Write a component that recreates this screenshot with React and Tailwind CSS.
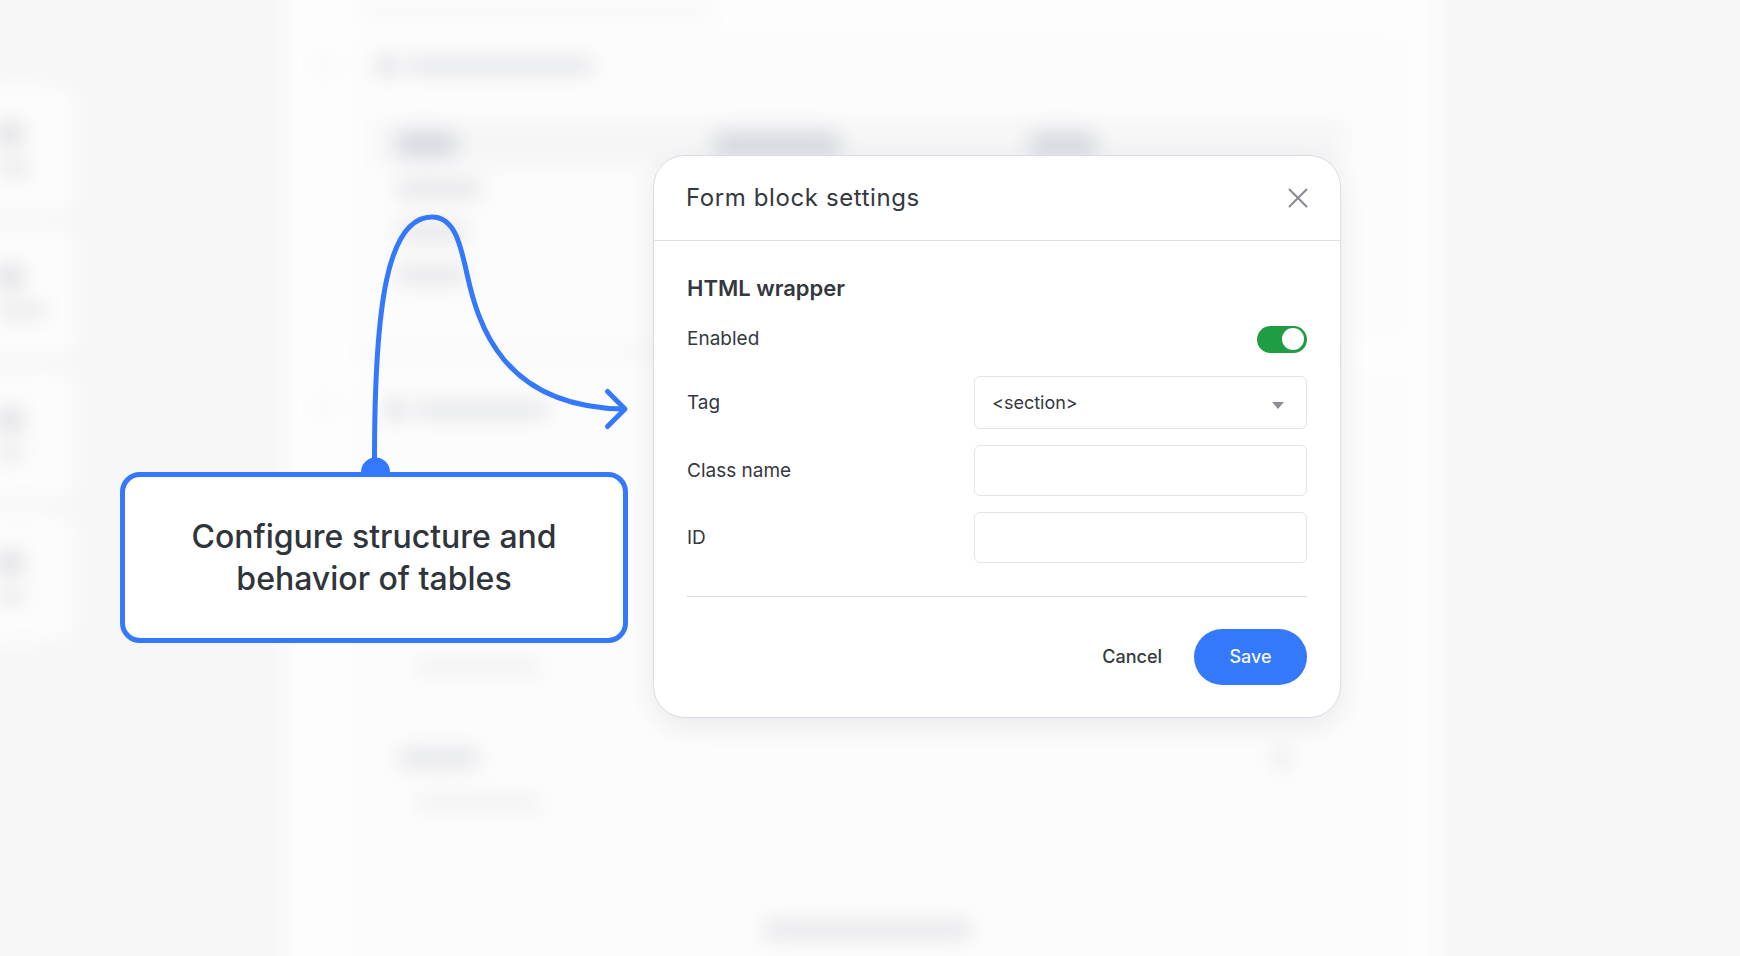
import React, { useState } from 'react'

const blocks = ['w-[36px]', 'w-[52px]', 'w-[28px]', 'w-[30px]']

const columns = ['w-[64px]', 'w-[130px]', 'w-[70px]']

const rows = ['w-[88px]', 'w-[74px]', 'w-[74px]']

function Sidebar() {
  return (
    <div className="flex w-[116px] shrink-0 flex-col gap-[18px] pt-[126px]">
      {blocks.map((label, i) => (
        <div key={i} className="h-[125px] rounded-3xl bg-[#fcfcfc] pt-9 pl-9">
          <div className="h-6 w-7 rounded-lg bg-[#dfe0e3]" />
          <div className="mt-4 flex h-3">
            <div className={`${label} rounded-full bg-[#e3e4e7]`} />
          </div>
        </div>
      ))}
    </div>
  )
}

function SectionHeader({ title }) {
  return (
    <div className="flex h-5 items-center gap-2">
      <div className="h-5 w-5 rounded-md bg-[#dfe0e4]" />
      <div className={`${title} h-4 rounded-full bg-[#e4e5e8]`} />
    </div>
  )
}

function Field({ title, children }) {
  return (
    <div className="mt-8">
      <div className="flex items-center justify-between pr-5 pl-3">
        <div className={`${title} h-5 rounded-full bg-[#e6e7ea]`} />
        <div className="h-5 w-4 rounded bg-[#e8e9ed]" />
      </div>
      {children}
    </div>
  )
}

/* Editor page that sits out of focus behind the dialog */
function Backdrop() {
  return (
    <div className="absolute inset-0 overflow-hidden" aria-hidden="true">
      <div className="-m-10 flex h-[1100px] blur-[10px]">
        <Sidebar />
        <div className="mr-[342px] ml-[210px] flex flex-1 flex-col bg-[#fdfdfd] px-8 pt-[45px]">
          <div className="ml-[38px] h-3 w-[360px] rounded-full bg-[#f5f5f5]" />

          <div className="mt-5 flex gap-6">
            <div className="mt-4 h-6 w-[14px] rounded bg-[#f7f7f7]" />
            <div className="h-[298px] flex-1 rounded-2xl border border-[#f8f8f8] bg-[#fcfcfc] pt-[18px] pr-[60px] pl-5">
              <SectionHeader title="w-[190px]" />
              <div className="mt-11 grid h-[48px] grid-cols-3 items-center bg-[#f6f6f7] pl-[18px]">
                {columns.map((width, i) => (
                  <div key={i} className={`${width} h-6 rounded-full bg-[#d5d8df]`} />
                ))}
              </div>
              {rows.map((width, i) => (
                <div key={i} className="flex h-[43px] items-center border-b border-[#f6f6f6] pl-[18px]">
                  <div className={`${width} h-5 rounded-full bg-[#e8e8eb]`} />
                </div>
              ))}
            </div>
          </div>

          <div className="mt-3 ml-[38px] h-3 w-[355px] rounded-full bg-[#f6f6f6]" />

          <div className="mt-4 flex gap-6">
            <div className="mt-5 h-6 w-[14px] rounded bg-[#f7f7f7]" />
            <div className="flex-1 rounded-2xl border border-[#f8f8f8] bg-[#fcfcfc] pt-6 pr-24 pb-12 pl-7">
              <SectionHeader title="w-[136px]" />
              <div className="mt-[192px] flex h-[104px] items-end rounded-xl border border-[#f7f7f7] px-7 pb-10">
                <div className="h-4 w-[128px] rounded-full bg-[#f1f1f1]" />
              </div>
              <Field title="w-[84px]">
                <div className="mt-3 flex h-[104px] items-start rounded-xl border border-[#f7f7f7] px-7 pt-[14px]">
                  <div className="h-4 w-[128px] rounded-full bg-[#f1f1f1]" />
                </div>
              </Field>
              <div className="mt-9 ml-[376px] h-5 w-[212px] rounded-full bg-[#e8e8eb]" />
            </div>
          </div>
        </div>
      </div>
    </div>
  )
}

function Callout() {
  return (
    <div className="mt-14 flex w-[508px] flex-col">
      <svg
        viewBox="0 0 508 261"
        className="block w-full overflow-visible"
        fill="none"
        stroke="#3478fb"
        strokeWidth="5"
        strokeLinecap="round"
        strokeLinejoin="round"
      >
        <path d="M254.5 258C254 90 268 6 312 6C336 6 341 37 347 63C358 113 382 196 504 198" />
        <path d="M487.500 180.500L505 198L487.500 215.500" />
        <circle cx="255.500" cy="261" r="14.500" fill="#3478fb" stroke="none" />
      </svg>
      <div className="relative flex h-[171px] items-center justify-center rounded-[20px] border-5 border-[#3478fb] bg-white px-10">
        <p className="text-center text-[32px] leading-[42px] font-medium text-[#30343b]">
          Configure structure and
          <br />
          behavior of tables
        </p>
      </div>
    </div>
  )
}

function SettingsDialog() {
  const [enabled, setEnabled] = useState(true)
  const [tag, setTag] = useState('section')
  const [className, setClassName] = useState('')
  const [id, setId] = useState('')

  return (
    <form
      role="dialog"
      aria-labelledby="dialog-title"
      onSubmit={(e) => e.preventDefault()}
      className="w-[688px] rounded-[32px] border border-[#d9dce8] bg-white text-lg text-[#343840] shadow-[0_8px_28px_rgba(40,45,70,0.09)]"
    >
      <div className="flex h-[85px] items-center justify-between border-b border-[#dfe1e8] px-8">
        <h1 id="dialog-title" className="text-2xl tracking-wide">
          Form block settings
        </h1>
        <button type="button" aria-label="Close" className="text-[#868a91]">
          <svg viewBox="0 0 20 20" className="h-5 w-5" fill="none" stroke="currentColor" strokeWidth="2" strokeLinecap="round">
            <path d="M1.500 1.500L18.500 18.500M18.500 1.500L1.500 18.500" />
          </svg>
        </button>
      </div>

      <div className="px-[33px] py-8">
        <h2 className="text-[22px] leading-[30px] font-semibold">HTML wrapper</h2>

        <div className="mt-[22px] flex h-7 items-center justify-between">
          <label htmlFor="enabled" className="text-[19px]">Enabled</label>
          <input
            id="enabled"
            type="checkbox"
            role="switch"
            checked={enabled}
            onChange={(e) => setEnabled(e.target.checked)}
            className="flex h-[27px] w-[50px] appearance-none items-center rounded-full bg-gray-300 px-[3px] before:h-[22px] before:w-[22px] before:rounded-full before:bg-white checked:justify-end checked:bg-[#1f9d45]"
          />
        </div>

        <div className="mt-[23px] flex flex-col gap-4">
          <div className="flex items-center justify-between">
            <label htmlFor="tag" className="text-[19px]">Tag</label>
            <div className="relative w-[333px]">
              <select
                id="tag"
                value={tag}
                onChange={(e) => setTag(e.target.value)}
                className="block h-[53px] w-full appearance-none rounded-md border border-[#e2e3e9] bg-white px-[17px]"
              >
                <option value="section">&lt;section&gt;</option>
                <option value="div">&lt;div&gt;</option>
              </select>
              <svg viewBox="0 0 12 7" className="pointer-events-none absolute top-[26px] right-[23px] h-[7px] w-3" fill="#8d8f95">
                <path d="M0 0H12L6 7Z" />
              </svg>
            </div>
          </div>
          <div className="flex items-center justify-between">
            <label htmlFor="class-name" className="text-[19px]">Class name</label>
            <input
              id="class-name"
              type="text"
              value={className}
              onChange={(e) => setClassName(e.target.value)}
              className="h-[51px] w-[333px] rounded-md border border-[#e4e4e7] px-[17px]"
            />
          </div>
          <div className="flex items-center justify-between">
            <label htmlFor="block-id" className="text-[19px]">ID</label>
            <input
              id="block-id"
              type="text"
              value={id}
              onChange={(e) => setId(e.target.value)}
              className="h-[51px] w-[333px] rounded-md border border-[#e4e4e7] px-[17px]"
            />
          </div>
        </div>

        <div className="mt-[33px] flex items-center justify-end gap-8 border-t border-[#cfd6e4] pt-8 font-medium">
          <button type="button">Cancel</button>
          <button type="submit" className="h-14 w-[113px] rounded-full bg-[#3478fb] text-[#f4f6fb]">
            Save
          </button>
        </div>
      </div>
    </form>
  )
}

export default function App() {
  return (
    <div className="relative min-h-screen overflow-hidden bg-[#f7f7f7] font-['Inter',sans-serif]">
      <Backdrop />
      <main className="relative flex items-start gap-[25px] pt-[155px] pl-[120px]">
        <Callout />
        <SettingsDialog />
      </main>
    </div>
  )
}
